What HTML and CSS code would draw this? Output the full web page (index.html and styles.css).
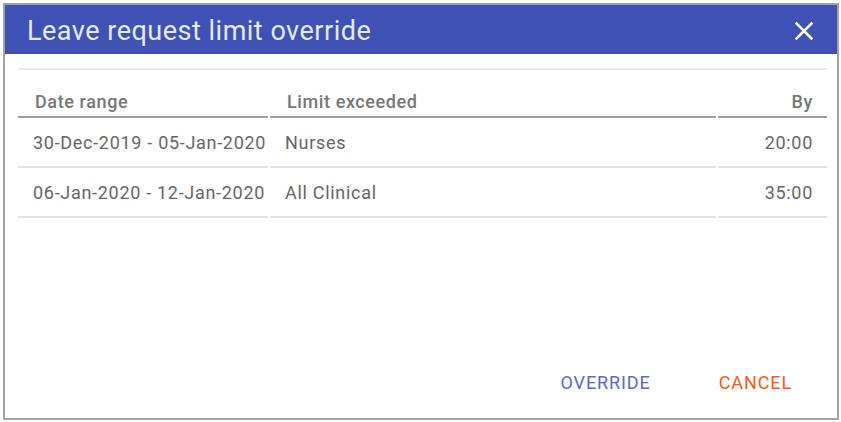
FILE: index.html
```html
<!DOCTYPE html>
<html>
<head>
<meta charset="utf-8">
<link rel="stylesheet" href="styles.css">
</head>
<body>
<div class="dialog">
  <div class="dialog-header">
    <h1 class="dialog-title">Leave request limit override</h1>
    <button class="close-btn" aria-label="Close">
      <svg width="18" height="18" viewBox="0 0 18 18"><path d="M1.5 1.5 L16.5 16.5 M16.5 1.5 L1.5 16.5" stroke="#fff" stroke-width="2.6" stroke-linecap="square"/></svg>
    </button>
  </div>
  <div class="dialog-body">
    <div class="divider"></div>
    <table class="grid">
      <thead>
        <tr>
          <th class="col-date">Date range</th>
          <th class="col-limit">Limit exceeded</th>
          <th class="col-by">By</th>
        </tr>
      </thead>
      <tbody>
        <tr>
          <td class="col-date">30-Dec-2019 - 05-Jan-2020</td>
          <td class="col-limit">Nurses</td>
          <td class="col-by">20:00</td>
        </tr>
        <tr>
          <td class="col-date">06-Jan-2020 - 12-Jan-2020</td>
          <td class="col-limit">All Clinical</td>
          <td class="col-by">35:00</td>
        </tr>
      </tbody>
    </table>
  </div>
  <div class="dialog-actions">
    <button class="btn btn-primary">Override</button>
    <button class="btn btn-warn">Cancel</button>
  </div>
</div>
</body>
</html>
```
FILE: styles.css
```css
html, body {
  margin: 0;
  padding: 0;
  background: #fff;
}
body {
  font-family: Roboto, "Liberation Sans", Arial, sans-serif;
  padding: 3px;
}
.dialog {
  box-sizing: border-box;
  width: 836px;
  height: 417px;
  border: 2px solid #a3a3a3;
  display: flex;
  flex-direction: column;
  background: #fff;
}
.dialog-header {
  height: 49px;
  background: #3f51b5;
  display: flex;
  align-items: center;
  justify-content: space-between;
  padding: 2px 24px 0 22px;
  box-sizing: border-box;
  flex-shrink: 0;
}
.dialog-title {
  margin: 0;
  font-size: 27px;
  font-weight: 400;
  color: #e6e8f4;
  letter-spacing: 0.5px;
}
.close-btn {
  background: none;
  border: 0;
  padding: 0;
  width: 18px;
  height: 18px;
  display: flex;
  cursor: pointer;
}
.dialog-body {
  flex: 1;
  padding: 14px 10px 0 13px;
}
.divider {
  height: 2px;
  background: #eaeaea;
}
.grid {
  border-collapse: separate;
  border-spacing: 2px 0;
  margin: 0 -2px;
  width: calc(100% + 4px);
  table-layout: fixed;
  font-size: 18px;
  letter-spacing: 0.7px;
}
.grid th {
  font-weight: 500;
  color: #777;
  text-align: left;
  height: 48px;
  vertical-align: bottom;
  padding: 0 0 4px 17px;
  line-height: 20px;
  border-bottom: 2px solid #9e9e9e;
  box-sizing: border-box;
  letter-spacing: 0.6px;
}
.grid td {
  color: #666;
  height: 50px;
  padding: 2px 0 0 15px;
  line-height: 20px;
  border-bottom: 2px solid #e0e0e0;
  box-sizing: border-box;
  white-space: nowrap;
}
.grid .col-date { width: 250px; }
.grid .col-by { width: 109px; text-align: right; }
.grid th.col-by,
.grid td.col-by { padding-right: 14px; }
.dialog-actions {
  display: flex;
  justify-content: flex-end;
  gap: 36px;
  padding: 0 29px 25px 0;
}
.btn {
  background: none;
  border: 0;
  font-family: inherit;
  font-size: 18px;
  letter-spacing: 0.9px;
  text-transform: uppercase;
  padding: 0 16px;
  line-height: 20px;
  cursor: pointer;
}
.btn-primary { color: #5c6bc0; }
.btn-warn { color: #ff5722; }
```
